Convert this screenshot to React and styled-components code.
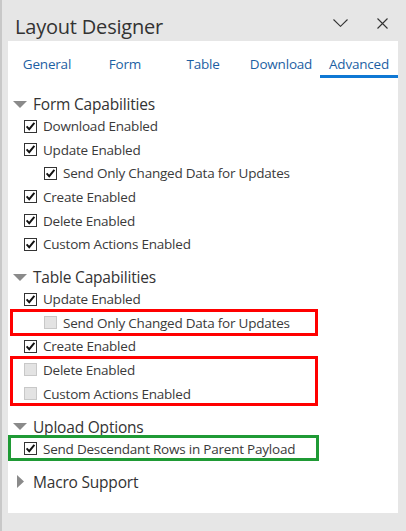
import React from "react";
import styled, { createGlobalStyle } from "styled-components";

const GlobalStyle = createGlobalStyle`
  html, body {
    margin: 0;
    padding: 0;
    background: #e6e6e6;
  }
  body {
    font-family: "Open Sans", "Noto Sans", "Liberation Sans", sans-serif;
    color: #333;
  }
`;

const Frame = styled.div`
  box-sizing: border-box;
  width: 406px;
  height: 531px;
  border-left: 2px solid #c8c8c8;
  display: flex;
  flex-direction: column;
  padding: 0 8px 18px 6px;
`;

const Header = styled.div`
  height: 41px;
  display: flex;
  align-items: flex-start;
  padding-left: 7px;
`;

const Title = styled.h1`
  flex: 1;
  margin: 0;
  padding-top: 13px;
  font-size: 20px;
  line-height: 27px;
  font-weight: 400;
  letter-spacing: -0.2px;
  color: #333;
`;

const IconButton = styled.button`
  border: none;
  background: none;
  padding: 0;
  width: 32px;
  height: 24px;
  margin-top: 11px;
  margin-right: ${(p) => p.gap || 0}px;
  display: flex;
  align-items: center;
  justify-content: center;
`;

const Panel = styled.div`
  flex: 1;
  background: #fff;
  display: flex;
  flex-direction: column;
`;

const Tabs = styled.div`
  display: grid;
  grid-template-columns: repeat(5, 1fr);
  height: 37px;
`;

const Tab = styled.div`
  display: flex;
  align-items: center;
  justify-content: center;
  font-size: 13.5px;
  letter-spacing: -0.2px;
  color: #1d5fa3;
  padding-top: 11px;
  box-sizing: border-box;
  border-bottom: 3px solid ${(p) => (p.active ? "#0f78d4" : "transparent")};
`;

const Content = styled.div`
  padding-top: 5px;
`;

const Section = styled.div`
  margin-top: 11px;
`;

const SectionHeader = styled.div`
  height: 20.4px;
  display: flex;
  align-items: center;
  font-size: 15.5px;
  letter-spacing: -0.2px;
  color: #333;
`;

const Caret = styled.span`
  width: 25px;
  display: flex;
  align-items: center;
  justify-content: ${(p) => (p.open ? "flex-start" : "center")};
  padding-left: ${(p) => (p.open ? 5 : 0)}px;
  box-sizing: border-box;
`;

const Row = styled.div`
  height: 23.6px;
  display: flex;
  align-items: center;
  padding-left: ${(p) => 16 + (p.indent ? 20 : 0)}px;
  font-size: 13.5px;
  letter-spacing: -0.22px;
  color: #3a3a3a;
`;

const Box = styled.span`
  width: 13px;
  height: 13px;
  box-sizing: border-box;
  border: 1px solid ${(p) => (p.checked ? "#333" : "#c8c8c8")};
  background: ${(p) => (p.checked ? "#fff" : "#e3e3e3")};
  display: flex;
  align-items: center;
  justify-content: center;
  margin-right: 6px;
  flex-shrink: 0;
`;

const Highlight = styled.div`
  position: relative;

  &::after {
    content: "";
    position: absolute;
    left: ${(p) => (p.color === "green" ? 0 : 2)}px;
    width: ${(p) => (p.color === "green" ? 311 : 308)}px;
    top: -2px;
    bottom: -1px;
    box-sizing: border-box;
    border: 3px solid ${(p) => (p.color === "green" ? "#1f9a35" : "#ff0000")};
    pointer-events: none;
  }
`;

const ChevronDown = () => (
  <svg width="15" height="8" viewBox="0 0 15 8">
    <path d="M0.5 0.5 L7.5 7.3 L14.5 0.5" fill="none" stroke="#333" strokeWidth="1.1" />
  </svg>
);

const Close = () => (
  <svg width="11" height="11" viewBox="0 0 11 11">
    <path d="M0.5 0.5 L10.5 10.5 M10.5 0.5 L0.5 10.5" fill="none" stroke="#333" strokeWidth="1.1" />
  </svg>
);

const TriangleDown = () => (
  <svg width="14" height="7" viewBox="0 0 14 7">
    <path d="M0 0 L14 0 L7 7 Z" fill="#8a8a8a" />
  </svg>
);

const TriangleRight = () => (
  <svg width="7" height="13" viewBox="0 0 7 13">
    <path d="M0 0 L7 6.5 L0 13 Z" fill="#8a8a8a" />
  </svg>
);

const Check = () => (
  <svg width="11" height="11" viewBox="0 0 11 11">
    <path d="M1.6 5.4 L4.2 8.2 L9.4 1.8" fill="none" stroke="#111" strokeWidth="1.9" />
  </svg>
);

const Option = ({ label, checked, indent }) => (
  <Row indent={indent}>
    <Box checked={checked}>{checked && <Check />}</Box>
    {label}
  </Row>
);

const SectionTitle = ({ title, open = true }) => (
  <SectionHeader>
    <Caret open={open}>{open ? <TriangleDown /> : <TriangleRight />}</Caret>
    {title}
  </SectionHeader>
);

const tabs = ["General", "Form", "Table", "Download", "Advanced"];

const App = () => {
  return (
    <>
      <GlobalStyle />
      <Frame>
        <Header>
          <Title>Layout Designer</Title>
          <IconButton gap={10}>
            <ChevronDown />
          </IconButton>
          <IconButton>
            <Close />
          </IconButton>
        </Header>
        <Panel>
          <Tabs>
            {tabs.map((t) => (
              <Tab key={t} active={t === "Advanced"}>
                {t}
              </Tab>
            ))}
          </Tabs>
          <Content>
            <Section>
              <SectionTitle title="Form Capabilities" />
              <Option label="Download Enabled" checked />
              <Option label="Update Enabled" checked />
              <Option label="Send Only Changed Data for Updates" checked indent />
              <Option label="Create Enabled" checked />
              <Option label="Delete Enabled" checked />
              <Option label="Custom Actions Enabled" checked />
            </Section>
            <Section>
              <SectionTitle title="Table Capabilities" />
              <Option label="Update Enabled" checked />
              <Highlight>
                <Option label="Send Only Changed Data for Updates" indent />
              </Highlight>
              <Option label="Create Enabled" checked />
              <Highlight>
                <Option label="Delete Enabled" />
                <Option label="Custom Actions Enabled" />
              </Highlight>
            </Section>
            <Section>
              <SectionTitle title="Upload Options" />
              <Highlight color="green">
                <Option label="Send Descendant Rows in Parent Payload" checked />
              </Highlight>
            </Section>
            <Section>
              <SectionTitle title="Macro Support" open={false} />
            </Section>
          </Content>
        </Panel>
      </Frame>
    </>
  );
};

export default App;
